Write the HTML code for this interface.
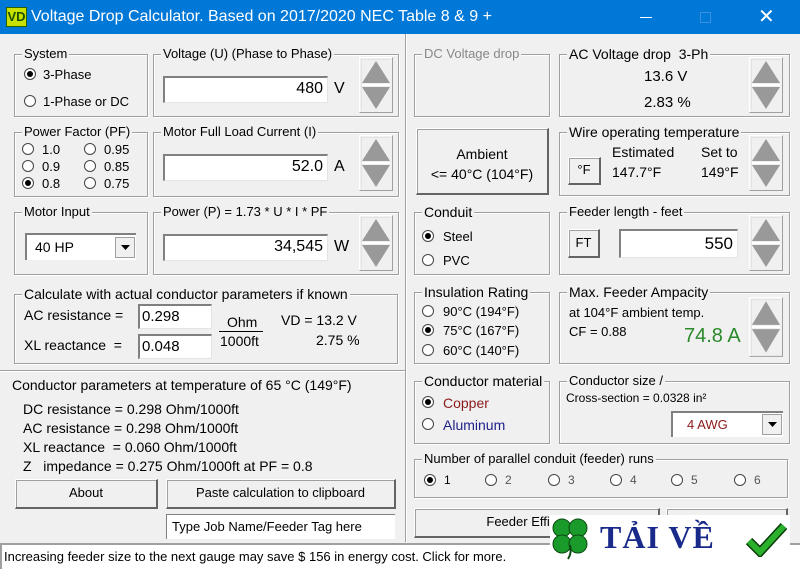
<!DOCTYPE html>
<html><head><meta charset="utf-8">
<style>
*{box-sizing:border-box;margin:0;padding:0}
body{width:800px;height:569px;overflow:hidden;background:#f0f0f0;font-family:"Liberation Sans",Arial,sans-serif;font-size:13px;color:#000;position:relative}
.a{position:absolute;white-space:nowrap}
.tb{left:0;top:0;width:800px;height:34px;background:#0078d7;color:#fff}
.g{position:absolute;border:1px solid #a0a0a0;box-shadow:1px 1px 0 #fff inset,1px 1px 0 #fff}
.gl{position:absolute;top:-9px;left:7px;background:#f0f0f0;padding:0 2px;font-size:13px;white-space:nowrap}
.in{position:absolute;background:#fff;border-top:2px solid #808080;border-left:2px solid #808080;border-right:1px solid #e3e3e3;border-bottom:1px solid #e3e3e3;text-align:right;padding-right:4px;font-size:16px;line-height:22px}
.btn{position:absolute;background:#f0f0f0;border:1px solid #fff;border-right:2px solid #646464;border-bottom:2px solid #646464;text-align:center;box-shadow:1px 1px 0 #a0a0a0 inset}
.r{position:absolute;width:12px;height:12px;border-radius:50%;border:1px solid #444;background:#fff}
.r.on::after{content:"";position:absolute;left:2px;top:2px;width:6px;height:6px;border-radius:50%;background:#000}
</style></head><body>
<div class="a tb">
 <div class="a" style="left:6px;top:7px;width:21px;height:20px;background:#c8e000;border:1px solid #2a6000;color:#1a5000;font-weight:bold;font-size:13px;line-height:18px;text-align:center">VD</div>
 <div class="a" style="left:31px;top:8px;font-size:16px">Voltage Drop Calculator. Based on 2017/2020 NEC Table 8 &amp; 9 +</div>
 <div class="a" style="left:640px;top:17px;width:12px;height:1px;background:#fff"></div>
 <div class="a" style="left:700px;top:12px;width:11px;height:11px;border:1px solid #3d8fe0"></div>
 <div class="a" style="left:758px;top:4px;font-size:20px;font-weight:300">✕</div>
</div>
<svg width="0" height="0" style="position:absolute"><defs><g id="spin"><rect x="0" y="0" width="34" height="56" fill="#f0f0f0"/><path d="M0.5 55.5V0.5H33.5" stroke="#fff" fill="none"/><path d="M33.5 0.5V55.5H0.5" stroke="#a0a0a0" fill="none"/><path d="M2.5 53.5V2.5H31.5" stroke="#e3e3e3" fill="none"/><polygon points="17,4 31,26 3,26" fill="#999"/><polygon points="3,30 31,30 17,52" fill="#999"/><line x1="3" y1="28" x2="31" y2="28" stroke="#fff" stroke-width="2"/></g></defs></svg>

<div class="a" style="left:405px;top:34px;width:2px;height:508px;border-left:1px solid #a0a0a0;border-right:1px solid #fff"></div>
<div class="a" style="left:0;top:370px;width:405px;height:2px;border-top:1px solid #a0a0a0;border-bottom:1px solid #fff"></div>

<div class="g" style="left:14px;top:54px;width:134px;height:63px"><span class="gl">System</span></div>
<div class="r on" style="left:24px;top:68px"></div><div class="a" style="left:43px;top:67px">3-Phase</div>
<div class="r" style="left:24px;top:95px"></div><div class="a" style="left:43px;top:94px">1-Phase or DC</div>

<div class="g" style="left:153px;top:54px;width:246px;height:63px"><span class="gl">Voltage (U) (Phase to Phase)</span></div>
<div class="in" style="left:163px;top:76px;width:165px;height:27px">480</div><div class="a" style="left:334px;top:80px;font-size:16px">V</div>
<svg class="a" style="left:359px;top:57px" width="34" height="56"><use href="#spin"/></svg>

<div class="g" style="left:14px;top:132px;width:134px;height:65px"><span class="gl">Power Factor (PF)</span></div>
<div class="r" style="left:22px;top:143px"></div><div class="a" style="left:42px;top:142px">1.0</div>
<div class="r" style="left:84px;top:143px"></div><div class="a" style="left:104px;top:142px">0.95</div>
<div class="r" style="left:22px;top:160px"></div><div class="a" style="left:42px;top:159px">0.9</div>
<div class="r" style="left:84px;top:160px"></div><div class="a" style="left:104px;top:159px">0.85</div>
<div class="r on" style="left:22px;top:177px"></div><div class="a" style="left:42px;top:176px">0.8</div>
<div class="r" style="left:84px;top:177px"></div><div class="a" style="left:104px;top:176px">0.75</div>

<div class="g" style="left:153px;top:132px;width:246px;height:65px"><span class="gl">Motor Full Load Current (I)</span></div>
<div class="in" style="left:163px;top:154px;width:165px;height:27px">52.0</div><div class="a" style="left:334px;top:158px;font-size:16px">A</div>
<svg class="a" style="left:359px;top:135px" width="34" height="56"><use href="#spin"/></svg>

<div class="g" style="left:14px;top:212px;width:134px;height:63px"><span class="gl">Motor Input</span></div>
<div class="a" style="left:25px;top:233px;width:111px;height:27px;background:#fff;border-top:2px solid #808080;border-left:2px solid #808080"><span class="a" style="left:8px;top:4px;font-size:14px">40 HP</span><div class="a" style="left:88px;top:2px;width:20px;height:21px;background:#f0f0f0;border:1px solid #a0a0a0"><svg class="a" style="left:5px;top:7px" width="9" height="6"><polygon points="0,0 9,0 4.5,5" fill="#000"/></svg></div></div>
<div class="g" style="left:153px;top:212px;width:246px;height:63px"><span class="gl">Power (P) = 1.73 * U * I * PF</span></div>
<div class="in" style="left:163px;top:234px;width:165px;height:27px">34,545</div><div class="a" style="left:334px;top:238px;font-size:16px">W</div>
<svg class="a" style="left:359px;top:215px" width="34" height="56"><use href="#spin"/></svg>

<div class="g" style="left:14px;top:294px;width:384px;height:70px"><span class="gl" style="font-size:14px">Calculate with actual conductor parameters if known</span></div>
<div class="a" style="left:24px;top:307px;font-size:14px">AC resistance =</div>
<div class="a" style="left:24px;top:337px;font-size:14px">XL reactance &nbsp;=</div>
<div class="in" style="left:138px;top:304px;width:74px;height:25px;text-align:left;padding-left:2px;font-size:15px">0.298</div>
<div class="in" style="left:138px;top:334px;width:74px;height:25px;text-align:left;padding-left:2px;font-size:15px">0.048</div>
<div class="a" style="left:227px;top:314px;font-size:14px">Ohm</div>
<div class="a" style="left:219px;top:331px;width:44px;height:1px;background:#000"></div>
<div class="a" style="left:220px;top:333px;font-size:14px">1000ft</div>
<div class="a" style="left:281px;top:312px;font-size:14px">VD = 13.2 V</div>
<div class="a" style="left:316px;top:332px;font-size:14px">2.75 %</div>

<div class="a" style="left:12px;top:377px;font-size:14px">Conductor parameters at temperature of 65 °C (149°F)</div>
<div class="a" style="left:23px;top:400px;font-size:14px;line-height:19px">DC resistance = 0.298 Ohm/1000ft<br>AC resistance = 0.298 Ohm/1000ft<br>XL reactance &nbsp;= 0.060 Ohm/1000ft<br>Z &nbsp;&nbsp;impedance = 0.275 Ohm/1000ft at PF = 0.8</div>
<div class="btn" style="left:15px;top:479px;width:143px;height:30px;line-height:26px">About</div>
<div class="btn" style="left:166px;top:479px;width:230px;height:30px;line-height:26px">Paste calculation to clipboard</div>
<div class="a" style="left:166px;top:514px;width:229px;height:25px;background:#fff;border-top:1px solid #808080;border-left:1px solid #808080;padding:4px 5px;font-size:13px">Type Job Name/Feeder Tag here</div>

<div class="g" style="left:414px;top:54px;width:136px;height:63px;color:#888"><span class="gl" style="color:#888">DC Voltage drop</span></div>
<div class="g" style="left:559px;top:54px;width:231px;height:63px"><span class="gl" style="font-size:14px">AC Voltage drop &nbsp;3-Ph</span></div>
<div class="a" style="left:644px;top:68px;font-size:15px">13.6 V</div>
<div class="a" style="left:644px;top:94px;font-size:15px">2.83 %</div>
<svg class="a" style="left:749px;top:57px" width="34" height="56"><use href="#spin"/></svg>

<div class="btn" style="left:416px;top:128px;width:133px;height:67px;padding-top:15px;line-height:20px;font-size:14px">Ambient<br>&lt;= 40°C (104°F)</div>
<div class="g" style="left:559px;top:132px;width:231px;height:64px"><span class="gl" style="font-size:14px">Wire operating temperature</span></div>
<div class="a" style="left:612px;top:144px;font-size:14px">Estimated</div>
<div class="a" style="left:701px;top:144px;font-size:14px">Set to</div>
<div class="btn" style="left:568px;top:157px;width:33px;height:28px;line-height:24px">°F</div>
<div class="a" style="left:612px;top:164px;font-size:14px">147.7°F</div>
<div class="a" style="left:701px;top:164px;font-size:14px">149°F</div>
<svg class="a" style="left:749px;top:135px" width="34" height="56"><use href="#spin"/></svg>

<div class="g" style="left:414px;top:212px;width:136px;height:63px"><span class="gl" style="font-size:14px">Conduit</span></div>
<div class="r on" style="left:422px;top:230px"></div><div class="a" style="left:443px;top:229px">Steel</div>
<div class="r" style="left:422px;top:254px"></div><div class="a" style="left:443px;top:253px">PVC</div>
<div class="g" style="left:559px;top:212px;width:231px;height:63px"><span class="gl">Feeder length - feet</span></div>
<div class="btn" style="left:568px;top:229px;width:32px;height:29px;line-height:25px">FT</div>
<div class="in" style="left:619px;top:229px;width:119px;height:29px;font-size:17px;line-height:25px">550</div>
<svg class="a" style="left:749px;top:215px" width="34" height="56"><use href="#spin"/></svg>

<div class="g" style="left:414px;top:292px;width:136px;height:72px"><span class="gl" style="font-size:14px">Insulation Rating</span></div>
<div class="r" style="left:422px;top:305px"></div><div class="a" style="left:443px;top:304px">90°C (194°F)</div>
<div class="r on" style="left:422px;top:324px"></div><div class="a" style="left:443px;top:323px">75°C (167°F)</div>
<div class="r" style="left:422px;top:344px"></div><div class="a" style="left:443px;top:343px">60°C (140°F)</div>
<div class="g" style="left:559px;top:292px;width:231px;height:72px"><span class="gl" style="font-size:14px">Max. Feeder Ampacity</span></div>
<div class="a" style="left:569px;top:305px">at 104°F ambient temp.</div>
<div class="a" style="left:569px;top:324px">CF = 0.88</div>
<div class="a" style="left:684px;top:325px;font-size:20px;color:#2a8a2a">74.8 A</div>
<svg class="a" style="left:749px;top:297px" width="34" height="60"><use href="#spin" transform="scale(1,1.07)"/></svg>

<div class="g" style="left:414px;top:381px;width:136px;height:63px"><span class="gl" style="font-size:14px">Conductor material</span></div>
<div class="r on" style="left:422px;top:396px"></div><div class="a" style="left:443px;top:395px;color:#8b1a1a;font-size:14px">Copper</div>
<div class="r" style="left:422px;top:418px"></div><div class="a" style="left:443px;top:417px;color:#20208a;font-size:14px">Aluminum</div>
<div class="g" style="left:559px;top:381px;width:231px;height:63px"><span class="gl">Conductor size /</span></div>
<div class="a" style="left:566px;top:391px;font-size:12px">Cross-section = 0.0328 in²</div>
<div class="a" style="left:671px;top:411px;width:112px;height:26px;background:#fff;border-top:2px solid #808080;border-left:2px solid #808080"><span class="a" style="left:14px;top:4px;color:#8b1a1a">4 AWG</span><div class="a" style="left:89px;top:1px;width:20px;height:21px;background:#f0f0f0;border:1px solid #a0a0a0"><svg class="a" style="left:5px;top:7px" width="9" height="6"><polygon points="0,0 9,0 4.5,5" fill="#000"/></svg></div></div>

<div class="g" style="left:414px;top:459px;width:374px;height:39px"><span class="gl">Number of parallel conduit (feeder) runs</span></div>
<div class="r on" style="left:424px;top:474px"></div><div class="a" style="left:444px;top:473px;font-size:12px">1</div>
<div class="r" style="left:485px;top:474px"></div><div class="a" style="left:505px;top:473px;font-size:12px;color:#555">2</div>
<div class="r" style="left:548px;top:474px"></div><div class="a" style="left:568px;top:473px;font-size:12px;color:#555">3</div>
<div class="r" style="left:610px;top:474px"></div><div class="a" style="left:630px;top:473px;font-size:12px;color:#555">4</div>
<div class="r" style="left:671px;top:474px"></div><div class="a" style="left:691px;top:473px;font-size:12px;color:#555">5</div>
<div class="r" style="left:734px;top:474px"></div><div class="a" style="left:754px;top:473px;font-size:12px;color:#555">6</div>

<div class="btn" style="left:414px;top:508px;width:246px;height:30px;line-height:26px">Feeder Efficiency</div>
<div class="btn" style="left:666px;top:508px;width:122px;height:30px"></div>

<div class="a" style="left:0;top:543px;width:800px;height:26px;background:#fff;border-top:2px solid #a0a0a0;border-left:2px solid #a0a0a0;padding:4px 2px;font-size:13px">Increasing feeder size to the next gauge may save $ 156 in energy cost. Click for more.</div>

<div class="a" style="left:550px;top:515px;width:240px;height:45px;background:#fff">
 <svg class="a" style="left:0;top:0" width="42" height="45"><g fill="#1a9a2a" stroke="#0a4a10" stroke-width="1"><circle cx="12" cy="13" r="9"/><circle cx="28" cy="13" r="9"/><circle cx="12" cy="29" r="9"/><circle cx="28" cy="29" r="9"/></g><path d="M20 30 Q22 38 18 44" stroke="#0a4a10" stroke-width="2" fill="none"/></svg>
 <div class="a" style="left:50px;top:4px;font-family:'Liberation Serif',serif;font-weight:bold;font-size:32px;color:#1a2a8a;letter-spacing:1px">TẢI VỀ</div>
 <svg class="a" style="left:196px;top:6px" width="42" height="36"><path d="M3 20 L14 31 L38 5" stroke="#0a3a0a" stroke-width="9" fill="none"/><path d="M3 20 L14 31 L38 5" stroke="#2ab02a" stroke-width="6" fill="none"/></svg>
</div>
</body></html>
